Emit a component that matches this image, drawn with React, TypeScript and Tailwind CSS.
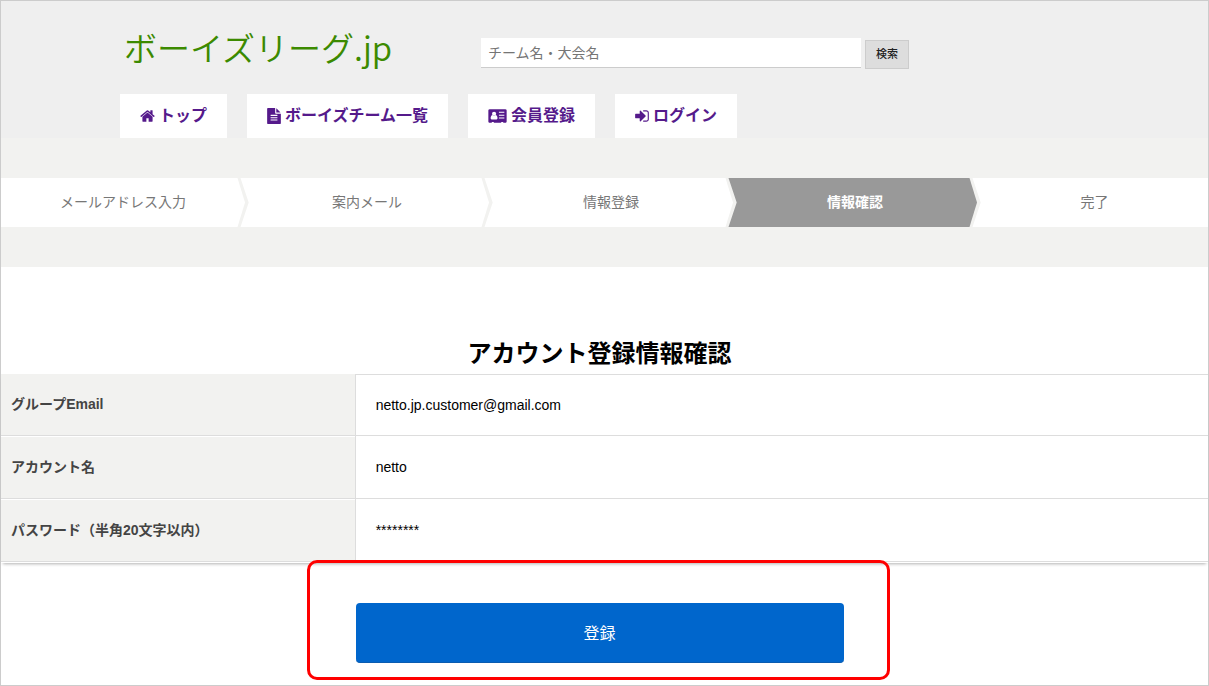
import React from 'react';

function HomeIcon() {
  return (
    <svg className="w-[15px] h-4 shrink-0" viewBox="48 0 1696 1792" fill="currentColor" aria-hidden="true">
      <path d="M1472 992v480q0 26-19 45t-45 19h-384v-384h-256v384h-384q-26 0-45-19t-19-45v-480q0-1 .5-3t.5-3l575-474 575 474q1 2 1 6zm223-69l-62 74q-8 9-21 11h-3q-13 0-21-7l-692-577-692 577q-12 8-24 7-13-2-21-11l-62-74q-8-10-7-23.5t11-21.5l719-599q32-26 76-26t76 26l244 204v-195q0-14 9-23t23-9h192q14 0 23 9t9 23v408l219 182q10 8 11 21.5t-7 23.500z" />
    </svg>
  );
}

function FileIcon() {
  return (
    <svg className="w-[14px] h-4 shrink-0" viewBox="128 0 1536 1792" fill="currentColor" aria-hidden="true">
      <path d="M1596 476q14 14 28 36h-472v-472q22 14 36 28zm-476 164h544v1056q0 40-28 68t-68 28h-1344q-40 0-68-28t-28-68v-1600q0-40 28-68t68-28h800v544q0 40 28 68t68 28zm160 736v-64q0-14-9-23t-23-9h-704q-14 0-23 9t-9 23v64q0 14 9 23t23 9h704q14 0 23-9t9-23zm0-256v-64q0-14-9-23t-23-9h-704q-14 0-23 9t-9 23v64q0 14 9 23t23 9h704q14 0 23-9t9-23zm0-256v-64q0-14-9-23t-23-9h-704q-14 0-23 9t-9 23v64q0 14 9 23t23 9h704q14 0 23-9t9-23z" />
    </svg>
  );
}

function CardIcon() {
  return (
    <svg className="w-[19px] h-4 shrink-0" viewBox="0 0 2048 1792" aria-hidden="true">
      <path
        fill="currentColor"
        d="M160 128h1728q66 0 113 47t47 113v1216q0 66-47 113t-113 47h-224v-96h-224v96h-832v-96h-224v96h-224q-66 0-113-47t-47-113v-1216q0-66 47-113t113-47z"
      />
      <circle cx="640" cy="640" r="232" fill="#fff" />
      <path fill="#fff" d="M470 790q170 150 340 0q150 10 190 190q24 90 24 180q0 120-110 120h-548q-110 0-110-120q0-90 24-180q40-180 190-190z" />
      <path fill="#fff" d="M1184 430h608v110h-608zM1184 750h608v110h-608zM1184 1070h608v110h-608z" />
    </svg>
  );
}

function SignInIcon() {
  return (
    <svg className="w-[14px] h-4 shrink-0" viewBox="0 0 1536 1792" fill="currentColor" aria-hidden="true">
      <path d="M1184 896q0 26-19 45l-544 544q-19 19-45 19t-45-19-19-45v-288h-448q-26 0-45-19t-19-45v-384q0-26 19-45t45-19h448v-288q0-26 19-45t45-19 45 19l544 544q19 19 19 45zm352-352v704q0 119-84.500 203.500t-203.500 84.500h-320q-13 0-22.500-9.500t-9.500-22.500q0-4-1-20t-.5-26.500 3-23.500 10-19.500 20.500-6.500h320q66 0 113-47t47-113v-704q0-66-47-113t-113-47h-312l-11.500-1-11.500-3-8-5.500-7-9-2-13.500q0-4-1-20t-.5-26.500 3-23.500 10-19.500 20.500-6.500h320q119 0 203.500 84.500t84.500 203.500z" />
    </svg>
  );
}

const navItems = [
  { label: 'トップ', href: '#top', icon: <HomeIcon /> },
  { label: 'ボーイズチーム一覧', href: '#teams', icon: <FileIcon /> },
  { label: '会員登録', href: '#register', icon: <CardIcon /> },
  { label: 'ログイン', href: '#login', icon: <SignInIcon /> },
];

const steps = ['メールアドレス入力', '案内メール', '情報登録', '情報確認', '完了'];
const currentStep = 3;

const rows = [
  { label: 'グループEmail', value: 'netto.jp.customer@gmail.com' },
  { label: 'アカウント名', value: 'netto' },
  { label: 'パスワード（半角20文字以内）', value: '********' },
];

function stepColor(index: number) {
  return index === currentStep ? '#999999' : '#ffffff';
}

function Header() {
  return (
    <header className="bg-[#efefef] pt-[18px]">
      <div className="max-w-[969px] mx-auto">
        <div className="flex items-start mb-[19px]">
          <h1 className="w-[361px] pl-1 text-[33px] leading-14 font-[350] text-[#3c8a00] font-['Noto_Sans_CJK_JP',sans-serif]">
            <a href="#top">ボーイズリーグ.jp</a>
          </h1>
          <form className="flex items-start gap-1 pt-[19px]">
            <input
              type="text"
              aria-label="チーム名・大会名"
              placeholder="チーム名・大会名"
              className="w-[380px] h-[30px] px-[7px] bg-white border-b border-[#ccc] text-sm placeholder:text-[#757575] outline-none"
            />
            <button
              type="button"
              className="mt-[2px] h-[29px] px-[10px] bg-[#ddd] border border-[#ccc] text-[11px] font-medium text-[#222]"
            >
              検索
            </button>
          </form>
        </div>
        <nav className="flex gap-5">
          {navItems.map((item) => (
            <a
              key={item.label}
              href={item.href}
              className="flex items-center gap-1 h-11 px-5 bg-white text-base font-bold text-[#551a8b]"
            >
              {item.icon}
              <span>{item.label}</span>
            </a>
          ))}
        </nav>
      </div>
    </header>
  );
}

function Steps() {
  return (
    <div className="bg-[#f2f2f0] py-10">
      <ol className="grid grid-cols-[244fr_244fr_244fr_244fr_231fr]">
        {steps.map((step, i) => (
          <li
            key={step}
            className={
              i === currentStep
                ? 'relative h-[49px] text-center text-sm leading-12 bg-[#999] text-white font-bold'
                : 'relative h-[49px] text-center text-sm leading-12 bg-white text-[#777] last:pl-1'
            }
          >
            {step}
            {i < steps.length - 1 && (
              <svg className="absolute top-0 -right-1 z-10 w-3 h-[49px]" viewBox="0 0 12 49" aria-hidden="true">
                <rect width="12" height="49" fill="#f2f2f0" />
                <path d="M0 0H.5L8 24.500L.5 49H0z" fill={stepColor(i)} />
                <path d="M3.500 0H12V49H3.500L11.700 24.500z" fill={stepColor(i + 1)} />
              </svg>
            )}
          </li>
        ))}
      </ol>
    </div>
  );
}

function AccountTable() {
  return (
    <div className="pb-px shadow-[0_3px_3px_-2px_rgba(0,0,0,0.3)]">
      <table className="w-full table-fixed border-separate border-spacing-0 text-sm">
        <tbody>
          {rows.map((row) => (
            <tr key={row.label} className="group">
              <th
                scope="row"
                className="w-[29.3%] h-[63px] group-first:h-[62px] px-[10px] pb-[2px] text-left font-bold text-[#444] bg-[#f2f2f0] border-t border-white group-first:border-[#f2f2f0] border-b border-b-[#ddd] group-first:border-b-[#ddd]"
              >
                {row.label}
              </th>
              <td className="px-5 text-black border-l border-b border-[#ddd] group-first:border-t">{row.value}</td>
            </tr>
          ))}
        </tbody>
      </table>
    </div>
  );
}

export default function App() {
  return (
    <div className="min-h-screen bg-white border border-[#ccc] font-['Liberation_Sans','Noto_Sans_CJK_JP',sans-serif]">
      <Header />
      <Steps />
      <main className="pt-[71px]">
        <h2 className="mb-1 pr-[10px] text-center text-2xl leading-8 font-bold text-black">アカウント登録情報確認</h2>
        <AccountTable />
        <div className="flex justify-center pt-10 pb-[22px] pr-[10px]">
          <div className="relative w-[488px]">
            <button
              type="button"
              className="w-full h-[60px] pt-[3px] rounded bg-[#0066cc] border-b border-[#0a5cb0] text-base text-white"
            >
              登録
            </button>
            {/* 登録ボタンを囲む赤枠 */}
            <span className="absolute -top-[43px] -bottom-[17px] -left-[49px] -right-[46px] rounded-[10px] border-3 border-[#f00] pointer-events-none" />
          </div>
        </div>
      </main>
    </div>
  );
}
